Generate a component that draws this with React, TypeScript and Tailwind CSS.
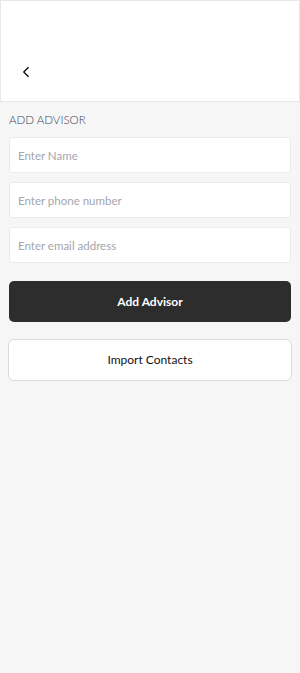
import { ChevronLeft } from "lucide-react";

const font = { fontFamily: "Lato, 'Open Sans', sans-serif" };

export default function App() {
  return (
    <div className="flex min-h-[673px] w-[300px] flex-col bg-[#f6f6f6]" style={font}>
      <div className="flex h-[102px] items-end border border-[#e8e8e8] bg-white px-[16px] pb-[20px]">
        <ChevronLeft className="h-[18px] w-[18px] text-black" strokeWidth={1.6} />
      </div>
      <div className="flex flex-col px-[9px] pt-[10px]">
        <h3 className="text-[11.5px] leading-[16px] font-light text-[#3f4757]">ADD ADVISOR</h3>
        <div className="mt-[9px] flex flex-col gap-[9px]">
          {["Enter Name", "Enter phone number", "Enter email address"].map((p) => (
            <input
              key={p}
              placeholder={p}
              className="h-[36px] w-full rounded-[3px] border border-[#ebebeb] bg-white px-[8px] text-[11.5px] outline-none placeholder:text-[#a2a6ae]"
              style={font}
            />
          ))}
        </div>
        <button className="mt-[18px] h-[41px] w-full rounded-[5px] bg-[#2d2d2d] text-[12px] font-bold text-white">
          Add Advisor
        </button>
        <button className="mt-[17px] -mx-px h-[42px] rounded-[6px] border border-[#dadada] bg-white text-[12px] font-normal text-[#111]">
          Import Contacts
        </button>
      </div>
    </div>
  );
}
